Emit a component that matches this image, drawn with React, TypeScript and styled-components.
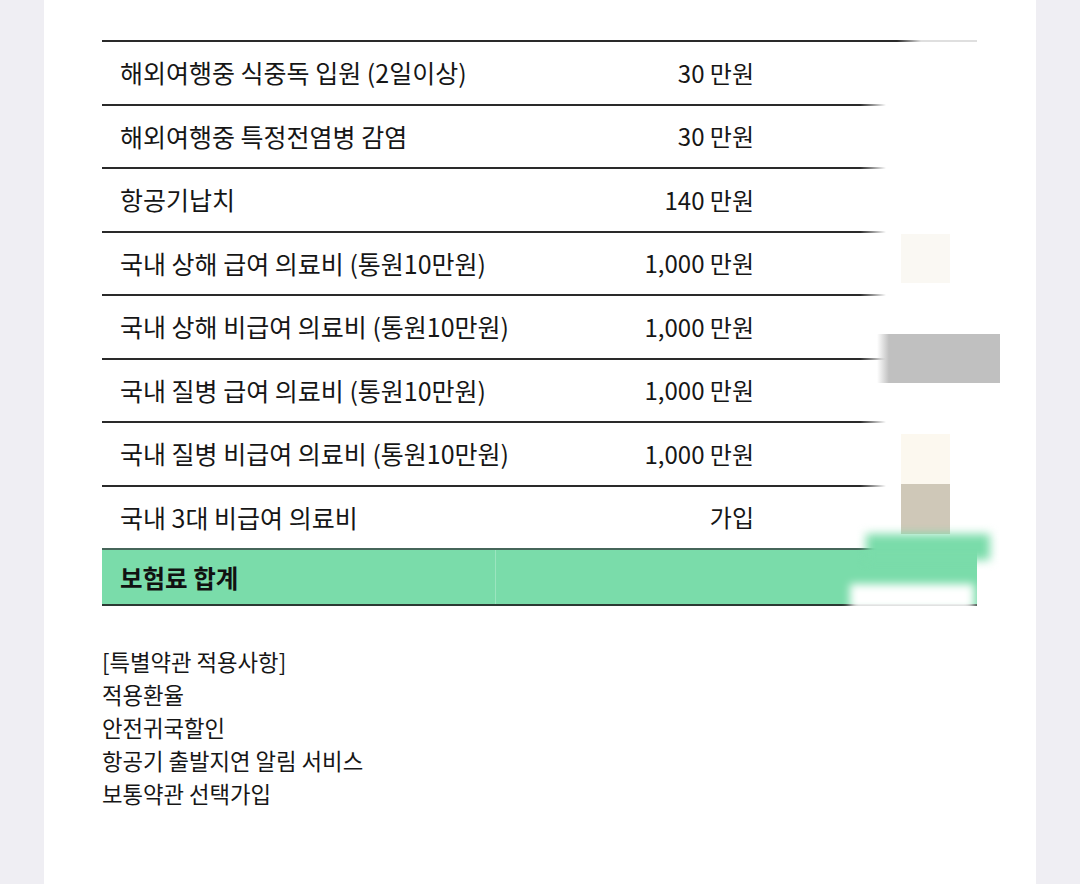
import React from "react";
import styled, { createGlobalStyle } from "styled-components";

const GlobalStyle = createGlobalStyle`
  html, body {
    margin: 0;
    padding: 0;
    background: #efeef3;
  }
  body {
    font-family: "Noto Sans CJK KR", "Noto Sans", sans-serif;
    color: #161616;
  }
`;

const Page = styled.div`
  box-sizing: border-box;
  width: 992px;
  min-height: 884px;
  margin-left: 44px;
  background: #ffffff;
  padding: 40px 0 0 58px;
`;

const TableWrap = styled.div`
  position: relative;
  width: 875px;
`;

const Row = styled.div`
  box-sizing: border-box;
  display: grid;
  grid-template-columns: 1fr 232px 205px;
  align-items: center;
  height: 63.5px;
  border-top: 2px solid #2a2a2a;
`;

const Label = styled.div`
  padding-left: 18px;
  font-size: 25px;
  line-height: 1;
  white-space: nowrap;
`;

const Value = styled.div`
  padding-right: 18px;
  text-align: right;
  font-size: 24px;
  line-height: 1;
  white-space: nowrap;
`;

const TotalRow = styled.div`
  box-sizing: border-box;
  display: grid;
  grid-template-columns: 394px 1fr;
  align-items: stretch;
  height: 58px;
  background: #7adcaa;
  border-top: 2px solid #46665a;
  border-bottom: 2px solid #2b3a33;
`;

const TotalLabel = styled.div`
  display: flex;
  align-items: center;
  padding-left: 18px;
  font-size: 24.5px;
  font-weight: 700;
  color: #111;
  border-right: 1px solid rgba(255, 255, 255, 0.25);
`;

const Mask = styled.div<{ $l: number; $t: number; $w: number; $h: number }>`
  position: absolute;
  left: ${(p) => p.$l}px;
  top: ${(p) => p.$t}px;
  width: ${(p) => p.$w}px;
  height: ${(p) => p.$h}px;
`;

const FadeMask = styled(Mask)`
  background: linear-gradient(to right, rgba(255, 255, 255, 0), #ffffff 26px);
`;

const TopLineMask = styled(Mask)`
  background: linear-gradient(to right, rgba(255, 255, 255, 0), rgba(255, 255, 255, 0.85) 24px);
`;

const Patch = styled(Mask)<{ $c: string }>`
  background: ${(p) => p.$c};
`;

const GrayPatch = styled(Mask)`
  background: linear-gradient(to right, rgba(192, 192, 192, 0), #c0c0c0 12px);
`;

const BlurPatch = styled(Mask)<{ $c: string; $b: number }>`
  background: ${(p) => p.$c};
  filter: blur(${(p) => p.$b}px);
`;

const Notes = styled.div`
  margin-top: 39px;
  font-size: 22.3px;
  line-height: 33px;
  color: #161616;
`;

const rows: [string, string][] = [
  ["해외여행중 식중독 입원 (2일이상)", "30 만원"],
  ["해외여행중 특정전염병 감염", "30 만원"],
  ["항공기납치", "140 만원"],
  ["국내 상해 급여 의료비 (통원10만원)", "1,000 만원"],
  ["국내 상해 비급여 의료비 (통원10만원)", "1,000 만원"],
  ["국내 질병 급여 의료비 (통원10만원)", "1,000 만원"],
  ["국내 질병 비급여 의료비 (통원10만원)", "1,000 만원"],
  ["국내 3대 비급여 의료비", "가입"],
];

const notes = [
  "[특별약관 적용사항]",
  "적용환율",
  "안전귀국할인",
  "항공기 출발지연 알림 서비스",
  "보통약관 선택가입",
];

export default function App() {
  return (
    <>
      <GlobalStyle />
      <Page>
        <TableWrap>
          {rows.map(([label, value]) => (
            <Row key={label}>
              <Label>{label}</Label>
              <Value>{value}</Value>
              <div />
            </Row>
          ))}
          <TotalRow>
            <TotalLabel>보험료 합계</TotalLabel>
            <div />
          </TotalRow>

          <TopLineMask $l={795} $t={0} $w={82} $h={2} />
          <FadeMask $l={758} $t={2} $w={140} $h={506} />
          <Patch $c="#faf8f3" $l={799} $t={194} $w={49} $h={49} />
          <GrayPatch $l={775} $t={294} $w={123} $h={49} />
          <Patch $c="#fcf8ef" $l={799} $t={394} $w={49} $h={50} />
          <Patch $c="#cfc8b8" $l={799} $t={444} $w={49} $h={50} />
          <BlurPatch $c="#7adcaa" $b={5} $l={764} $t={494} $w={124} $h={26} />
          <BlurPatch $c="#ffffff" $b={4} $l={748} $t={544} $w={124} $h={26} />
        </TableWrap>
        <Notes>
          {notes.map((n) => (
            <div key={n}>{n}</div>
          ))}
        </Notes>
      </Page>
    </>
  );
}
